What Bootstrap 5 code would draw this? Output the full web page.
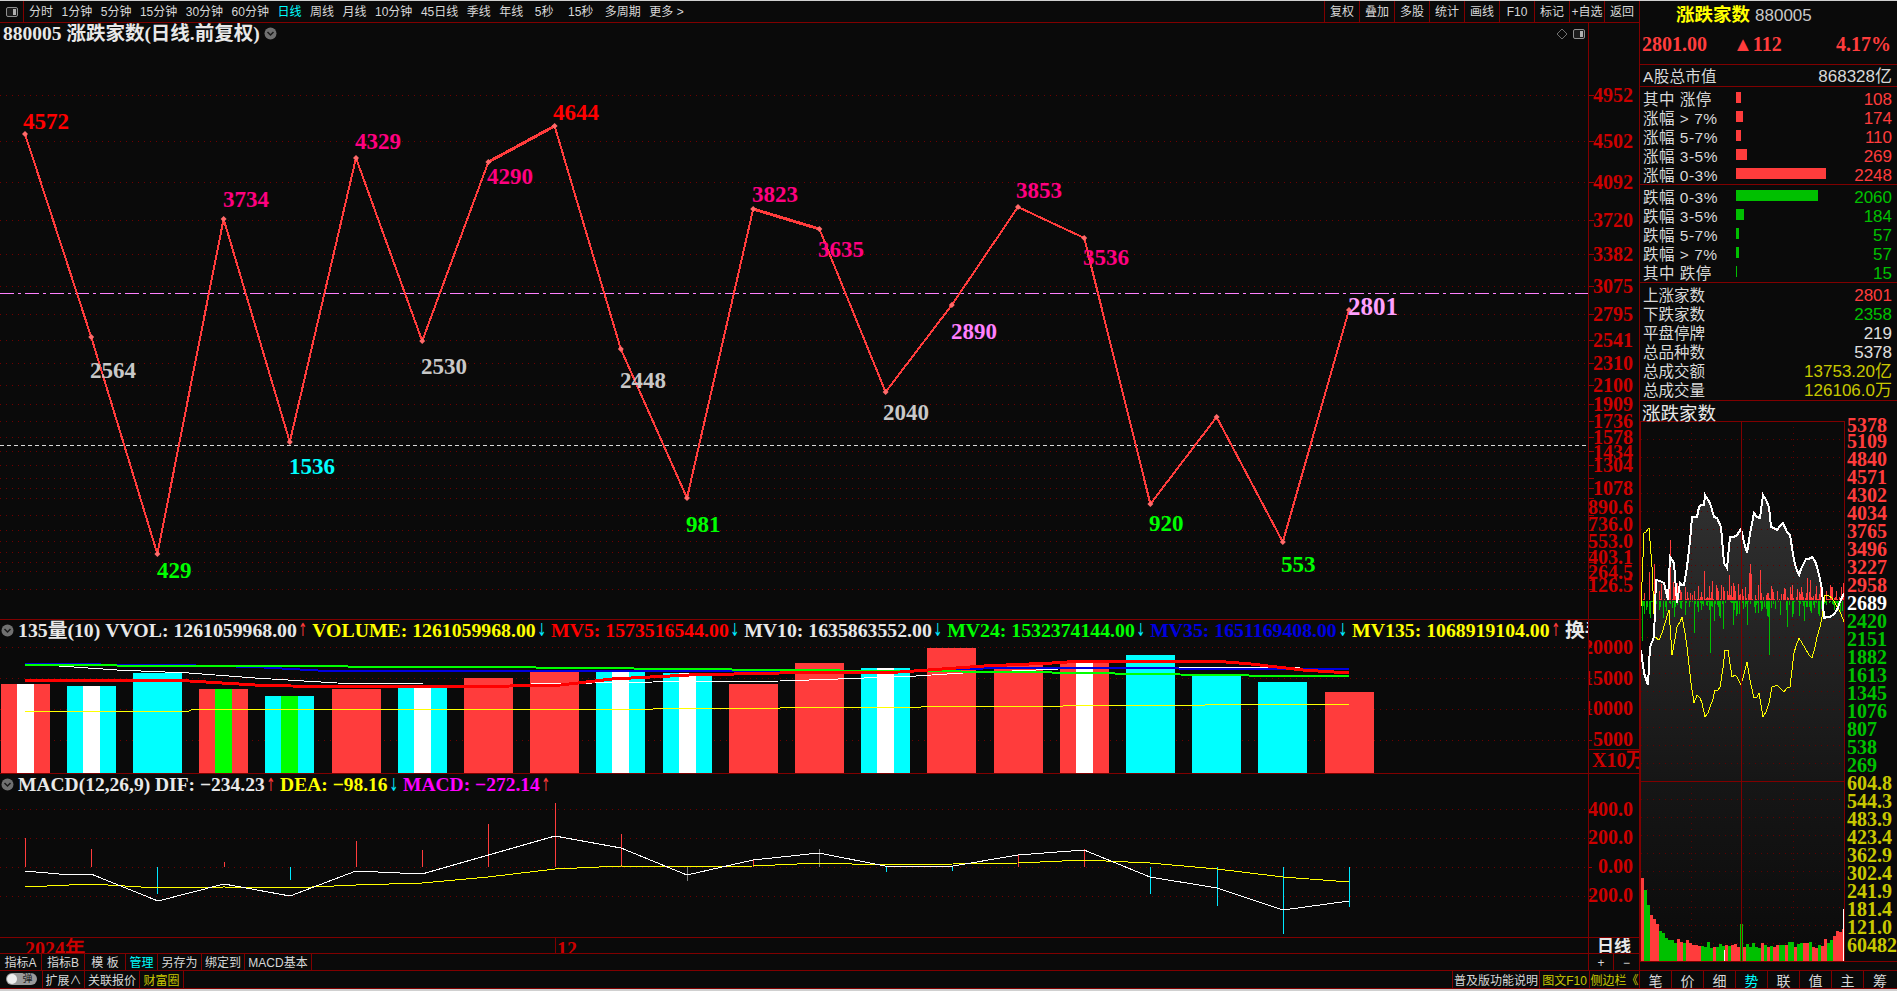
<!DOCTYPE html>
<html lang="zh-CN">
<head>
<meta charset="UTF-8">
<title>880005 涨跌家数</title>
<link href="https://cdn.jsdelivr.net/npm/bootstrap@5.3.2/dist/css/bootstrap.min.css" rel="stylesheet">
<script src="https://cdn.jsdelivr.net/npm/bootstrap@5.3.2/dist/js/bootstrap.bundle.min.js"></script>
<style>
    :root { --line: #800000; --sans: "Liberation Sans", "Noto Sans CJK SC", sans-serif; --serif: "Liberation Serif", "Noto Sans CJK SC", serif; }
    html, body { margin: 0; height: 991px; overflow: hidden; background: #0a0a0a; }
    svg { display: block; }
    .hq-app { width: 1897px; height: 991px; background: #0a0a0a; border-top: 1px solid #d0d0d0; border-bottom: 2px solid #d0d0d0; color: #d8d8d8; font-family: var(--sans); }
    .hq-left { width: 1640px; border-right: 1px solid var(--line); }
    .hq-right { width: 257px; }

    /* toolbars */
    .tool-bar { height: 22px; border-bottom: 1px solid var(--line); font-size: 12px; line-height: 23px; white-space: nowrap; }
    .tool-icon { width: 24px; border-right: 1px solid var(--line); }
    .tool-list { gap: 8.5px; padding-left: 5px; }
    .tool-gap { margin-left: 3px; margin-right: 3px; }
    .tool-cell { width: 35px; border-left: 1px solid var(--line); text-align: center; }
    .tool-on { color: #00ffff; }
    .tool-yel { color: #c8c800; }

    /* chart panes */
    .pane-main { height: 597px; border-bottom: 1px solid var(--line); }
    .pane-vol { height: 154px; border-bottom: 1px solid var(--line); }
    .pane-macd { height: 164px; border-bottom: 1px solid var(--line); }
    .pane-plot { width: 1588px; overflow: hidden; }
    .pane-axis { width: 51px; border-left: 1px solid var(--line); }
    .legend-row { font: bold 19.5px/20px var(--serif); white-space: nowrap; color: #e8e8e8; padding-left: 1px; }
    .legend-row > * { flex-shrink: 0; }
    .legend-vol { height: 20px; font-size: 19.75px; }
    .legend-macd { height: 21px; }
    .legend-title { height: 21px; padding-left: 3px; padding-right: 2px; }
    .legend-item { margin-left: 4.4px; }
    .legend-arrow { width: 11px; font: 18px/20px "DejaVu Sans", sans-serif; margin-left: -1px; margin-right: 1px; text-align: center; transform: scaleX(.6); }
    .c-wht { color: #e8e8e8; } .c-yel { color: #ffff00; } .c-red { color: #ff0000; } .c-grn { color: #00ff00; }
    .c-blu { color: #0000e0; } .c-mag { color: #ff00ff; } .c-cyn { color: #00e8ff; } .c-up { color: #ff3c3c; }

    /* bottom rows */
    .date-row { height: 16px; border-bottom: 1px solid var(--line); overflow: hidden; }
    .date-axis { width: 51px; border-left: 1px solid var(--line); font: bold 17px/17px var(--serif); text-align: center; color: #e8e8e8; }
    .cell-row { font-size: 12px; white-space: nowrap; border-bottom: 1px solid var(--line); }
    .cell-row-a { height: 17px; line-height: 18px; }
    .cell-row-b { height: 18px; line-height: 20px; }
    .row-cell { border-right: 1px solid var(--line); text-align: center; }
    .row-lcell { border-left: 1px solid var(--line); text-align: center; }
    .toggle-cell { width: 43px; }
    .toggle-pill { width: 31px; height: 12px; margin: 2px auto 0; border-radius: 6px; background: #9a9a9a; color: #222; font-size: 10px; line-height: 12px; text-align: right; padding-right: 4px; position: relative; }
    .toggle-pill::before { content: ""; position: absolute; left: 1px; top: 1px; width: 10px; height: 10px; border-radius: 50%; background: #eee; }
    .cw-25 { width: 25px; } .cw-26 { width: 26px; } .cw-32 { width: 32px; } .cw-41 { width: 41px; } .cw-42 { width: 42px; } .cw-43 { width: 43px; }
    .cw-44 { width: 44px; } .cw-50 { width: 50px; } .cw-55 { width: 55px; } .cw-67 { width: 67px; } .cw-87 { width: 87px; }

    /* right side quote panel */
    .q-head { height: 64px; border-bottom: 1px solid var(--line); }
    .q-name { height: 27px; padding-left: 36px; gap: 5px; }
    .q-title { font: bold 18.5px/25px "Noto Sans CJK SC", sans-serif; color: #ffff00; }
    .q-code { font-size: 17px; line-height: 30px; color: #c8c8c8; }
    .q-price { padding: 4px 6px 0 2px; font: bold 20px/24px var(--serif); color: #ff3c3c; }
    .q-change { margin-left: 26px; }
    .q-group { border-bottom: 1px solid var(--line); padding: 1px 5px 1px 3px; }
    .q-group-plain { padding-top: 3px; padding-bottom: 0; }
    .q-cap { height: 22px; border-bottom: 1px solid var(--line); padding: 0 5px 0 3px; font-size: 15.5px; line-height: 24px; letter-spacing: .3px; }
    .q-cap-num { font-size: 17px; letter-spacing: 0; }
    .q-line { height: 19px; line-height: 19px; font-size: 15.5px; white-space: pre; }
    .q-bars .q-label, .q-bars .q-num { padding-top: 4px; }
    .q-label { width: 93px; letter-spacing: .5px; }
    .q-bar { height: 11px; }
    .q-num { margin-left: auto; font-size: 17px; }
    .bar-up { background: #ff3c3c; } .bar-dn { background: #00c000; }
    .num-up { color: #ff3c3c; } .num-dn { color: #00c000; } .num-yel { color: #c8c800; } .num-wht { color: #e0e0e0; }
    .q-sub { height: 16px; padding-left: 2px; font: 18.5px/23px "Noto Sans CJK SC", sans-serif; color: #e8e8e8; position: relative; z-index: 1; }
    .q-tabs { height: 19px; border-top: 1px solid var(--line); border-bottom: 1px solid var(--line); font-size: 14px; line-height: 20px; }
    .q-tab { width: 32px; border-right: 1px solid var(--line); text-align: center; }

    /* svg text */
    .ax { font: bold 20px "Liberation Serif", serif; }
    .zz { font: bold 23px "Liberation Serif", serif; }
    .zz-big { font: bold 25px "Liberation Serif", serif; }
</style>
</head>
<body>
<div class="hq-app d-flex">

    <div class="hq-left d-flex flex-column">
        <!-- top toolbar -->
        <div class="tool-bar d-flex">
            <div class="tool-icon d-flex align-items-center justify-content-center">
                <svg width="14" height="12"><rect x="1.5" y="1.5" width="11" height="9" rx="1.5" fill="#1c1c1c" stroke="#909090"/><rect x="8" y="3" width="3" height="6" fill="#b0b0b0"/></svg>
            </div>
            <div class="tool-list d-flex">
                <span>分时</span><span>1分钟</span><span>5分钟</span><span>15分钟</span><span>30分钟</span><span>60分钟</span>
                <span class="tool-on">日线</span><span>周线</span><span>月线</span><span>10分钟</span><span>45日线</span><span>季线</span><span>年线</span>
                <span class="tool-gap">5秒</span><span class="tool-gap">15秒</span><span>多周期</span><span>更多 &gt;</span>
            </div>
            <div class="d-flex ms-auto">
                <div class="tool-cell">复权</div><div class="tool-cell">叠加</div><div class="tool-cell">多股</div><div class="tool-cell">统计</div>
                <div class="tool-cell">画线</div><div class="tool-cell">F10</div><div class="tool-cell">标记</div><div class="tool-cell">+自选</div><div class="tool-cell">返回</div>
            </div>
        </div>

        <!-- price pane -->
        <div class="pane-main d-flex">
            <div class="pane-plot d-flex flex-column">
                <div class="legend-row legend-title d-flex align-items-center">
                    <span>880005 涨跌家数(日线.前复权)</span>
                    <svg class="ms-1" width="13" height="13" viewBox="0 0 13 13"><circle cx="6.5" cy="6.5" r="6" fill="#707070"/><polyline points="3.5,5 6.5,8 9.5,5" fill="none" stroke="#1a1a1a" stroke-width="1.5"/></svg>
                    <svg class="ms-auto me-1" width="12" height="12" viewBox="0 0 12 12"><polygon points="6,1 11,6 6,11 1,6" fill="none" stroke="#707070"/></svg>
                    <svg width="14" height="12"><rect x="1.5" y="1.5" width="11" height="9" rx="1.5" fill="#1c1c1c" stroke="#909090"/><rect x="8" y="3" width="3" height="6" fill="#b0b0b0"/></svg>
                </div>
                <svg id="mainPlot" width="1588" height="575" viewBox="0 44 1588 575"></svg>
            </div>
            <div class="pane-axis"><svg id="mainAxis" width="50" height="596" viewBox="1589 23 50 596"></svg></div>
        </div>

        <!-- volume pane -->
        <div class="pane-vol d-flex">
            <div class="pane-plot d-flex flex-column">
                <div class="legend-row legend-vol d-flex align-items-center">
                    <svg class="me-1" width="13" height="13" viewBox="0 0 13 13"><circle cx="6.5" cy="6.5" r="6" fill="#707070"/><polyline points="3.5,5 6.5,8 9.5,5" fill="none" stroke="#1a1a1a" stroke-width="1.5"/></svg>
                    <span class="c-wht">135量(10) VVOL: 1261059968.00</span><span class="legend-arrow c-up">↑</span>
                    <span class="c-yel legend-item">VOLUME: 1261059968.00</span><span class="legend-arrow c-cyn">↓</span>
                    <span class="c-red legend-item">MV5: 1573516544.00</span><span class="legend-arrow c-cyn">↓</span>
                    <span class="c-wht legend-item">MV10: 1635863552.00</span><span class="legend-arrow c-cyn">↓</span>
                    <span class="c-grn legend-item">MV24: 1532374144.00</span><span class="legend-arrow c-cyn">↓</span>
                    <span class="c-blu legend-item">MV35: 1651169408.00</span><span class="legend-arrow c-cyn">↓</span>
                    <span class="c-yel legend-item">MV135: 1068919104.00</span><span class="legend-arrow c-up">↑</span>
                    <span class="c-wht legend-item">换手</span>
                </div>
                <svg id="volPlot" width="1588" height="133" viewBox="0 640 1588 133"></svg>
            </div>
            <div class="pane-axis"><svg id="volAxis" width="50" height="153" viewBox="1589 620 50 153"></svg></div>
        </div>

        <!-- macd pane -->
        <div class="pane-macd d-flex">
            <div class="pane-plot d-flex flex-column">
                <div class="legend-row legend-macd d-flex align-items-center">
                    <svg class="me-1" width="13" height="13" viewBox="0 0 13 13"><circle cx="6.5" cy="6.5" r="6" fill="#707070"/><polyline points="3.5,5 6.5,8 9.5,5" fill="none" stroke="#1a1a1a" stroke-width="1.5"/></svg>
                    <span class="c-wht">MACD(12,26,9) DIF: −234.23</span><span class="legend-arrow c-up">↑</span>
                    <span class="c-yel legend-item">DEA: −98.16</span><span class="legend-arrow c-cyn">↓</span>
                    <span class="c-mag legend-item">MACD: −272.14</span><span class="legend-arrow c-up">↑</span>
                </div>
                <svg id="macdPlot" width="1588" height="142" viewBox="0 795 1588 142"></svg>
            </div>
            <div class="pane-axis"><svg id="macdAxis" width="50" height="163" viewBox="1589 774 50 163"></svg></div>
        </div>

        <!-- date axis -->
        <div class="date-row d-flex">
            <div class="pane-plot"><svg id="datePlot" width="1588" height="15" viewBox="0 938 1588 15"></svg></div>
            <div class="date-axis">日线</div>
        </div>

        <!-- bottom tool rows -->
        <div class="cell-row cell-row-a d-flex">
            <div class="row-cell cw-42">指标A</div><div class="row-cell cw-43">指标B</div><div class="row-cell cw-41">模 板</div>
            <div class="row-cell cw-32 tool-on">管理</div><div class="row-cell cw-44">另存为</div><div class="row-cell cw-43">绑定到</div><div class="row-cell cw-67">MACD基本</div>
            <div class="row-lcell cw-25 ms-auto">+</div><div class="row-lcell cw-26">−</div>
        </div>
        <div class="cell-row cell-row-b d-flex">
            <div class="row-cell toggle-cell"><div class="toggle-pill">弹</div></div>
            <div class="row-cell cw-42">扩展∧</div><div class="row-cell cw-55">关联报价</div><div class="row-cell cw-44 tool-yel">财富圈</div>
            <div class="row-lcell cw-87 ms-auto">普及版功能说明</div>
            <div class="row-lcell cw-50 tool-yel">图文F10</div>
            <div class="row-lcell cw-50 tool-yel">侧边栏《</div>
        </div>
    </div>

    <!-- quote panel -->
    <div class="hq-right d-flex flex-column">
        <div class="q-head">
            <div class="q-name d-flex"><span class="q-title">涨跌家数</span><span class="q-code">880005</span></div>
            <div class="q-price d-flex"><span>2801.00</span><span class="q-change">▲112</span><span class="ms-auto">4.17%</span></div>
        </div>
        <div class="q-cap d-flex justify-content-between"><span>A股总市值</span><span class="q-cap-num">868328亿</span></div>
        <div class="q-group q-bars">
            <div class="q-line d-flex align-items-center"><span class="q-label">其中 涨停</span><div class="q-bar bar-up" style="width:5px"></div><span class="q-num num-up">108</span></div>
            <div class="q-line d-flex align-items-center"><span class="q-label">涨幅 &gt; 7%</span><div class="q-bar bar-up" style="width:7px"></div><span class="q-num num-up">174</span></div>
            <div class="q-line d-flex align-items-center"><span class="q-label">涨幅 5-7%</span><div class="q-bar bar-up" style="width:5px"></div><span class="q-num num-up">110</span></div>
            <div class="q-line d-flex align-items-center"><span class="q-label">涨幅 3-5%</span><div class="q-bar bar-up" style="width:11px"></div><span class="q-num num-up">269</span></div>
            <div class="q-line d-flex align-items-center"><span class="q-label">涨幅 0-3%</span><div class="q-bar bar-up" style="width:90px"></div><span class="q-num num-up">2248</span></div>
        </div>
        <div class="q-group q-bars">
            <div class="q-line d-flex align-items-center"><span class="q-label">跌幅 0-3%</span><div class="q-bar bar-dn" style="width:82px"></div><span class="q-num num-dn">2060</span></div>
            <div class="q-line d-flex align-items-center"><span class="q-label">跌幅 3-5%</span><div class="q-bar bar-dn" style="width:8px"></div><span class="q-num num-dn">184</span></div>
            <div class="q-line d-flex align-items-center"><span class="q-label">跌幅 5-7%</span><div class="q-bar bar-dn" style="width:3px"></div><span class="q-num num-dn">57</span></div>
            <div class="q-line d-flex align-items-center"><span class="q-label">跌幅 &gt; 7%</span><div class="q-bar bar-dn" style="width:3px"></div><span class="q-num num-dn">57</span></div>
            <div class="q-line d-flex align-items-center"><span class="q-label">其中 跌停</span><div class="q-bar bar-dn" style="width:1px"></div><span class="q-num num-dn">15</span></div>
        </div>
        <div class="q-group q-group-plain">
            <div class="q-line d-flex"><span>上涨家数</span><span class="q-num num-up">2801</span></div>
            <div class="q-line d-flex"><span>下跌家数</span><span class="q-num num-dn">2358</span></div>
            <div class="q-line d-flex"><span>平盘停牌</span><span class="q-num num-wht">219</span></div>
            <div class="q-line d-flex"><span>总品种数</span><span class="q-num num-wht">5378</span></div>
            <div class="q-line d-flex"><span>总成交额</span><span class="q-num num-yel">13753.20亿</span></div>
            <div class="q-line d-flex"><span>总成交量</span><span class="q-num num-yel">126106.0万</span></div>
        </div>
        <div class="q-sub">涨跌家数</div>
        <svg id="miniChart" width="257" height="553" viewBox="1640 417 257 553"></svg>
        <div class="q-tabs d-flex">
            <div class="q-tab">笔</div><div class="q-tab">价</div><div class="q-tab">细</div><div class="q-tab tool-on">势</div>
            <div class="q-tab">联</div><div class="q-tab">值</div><div class="q-tab">主</div><div class="q-tab border-0">筹</div>
        </div>
    </div>
</div>

<script>
    var LINE = "#800000", UP = "#ff3c3c", DOWN = "#00c000";

    function seg(x1, y1, x2, y2, color, width, dash) {
        return '<line x1="' + x1 + '" y1="' + y1 + '" x2="' + x2 + '" y2="' + y2 + '" stroke="' + color + '" stroke-width="' + (width || 1) + '"' +
            (dash ? ' stroke-dasharray="' + dash + '"' : '') + ' shape-rendering="crispEdges"/>';
    }
    function poly(points, color, width) {
        return '<polyline points="' + points.join(" ") + '" fill="none" stroke="' + color + '" stroke-width="' + (width || 1) + '" shape-rendering="crispEdges"/>';
    }
    function box(x, y, w, h, color) {
        return '<rect x="' + x + '" y="' + y + '" width="' + w + '" height="' + h + '" fill="' + color + '" shape-rendering="crispEdges"/>';
    }
    function label(x, y, text, color, cls, anchor) {
        return '<text x="' + x + '" y="' + y + '" class="' + cls + '" fill="' + color + '" text-anchor="' + (anchor || "start") + '" dominant-baseline="central">' + text + '</text>';
    }
    function dotted(y, x2) {
        return seg(0, y + 0.5, x2, y + 0.5, "#700000", 1, "1 5");
    }
    function rnd(i) {
        var v = Math.sin(i * 12.9898) * 43758.5453;
        return v - Math.floor(v);
    }
    var barX = function (i) { return 25 + 66.2 * i; };

    // price pane
    var ticks = [95, 141, 182, 220, 254, 286, 314, 340, 363, 385, 404, 421, 437, 451, 465, 478, 488, 498, 515, 530, 541, 552, 562, 571, 589];
    var zig = [134, 337, 554, 219, 442, 158, 341, 162, 126, 349, 498, 209, 229, 392, 305, 207, 238, 504, 417, 542, 310];
    var zigLabels = [
        [23, 121, "4572", "#ff0000"], [90, 370, "2564", "#c8c8c8"], [157, 570, "429", "#00ff00"], [223, 199, "3734", "#ff0080"],
        [289, 466, "1536", "#00ffff"], [355, 141, "4329", "#ff0080"], [421, 366, "2530", "#c8c8c8"], [487, 176, "4290", "#ff0080"],
        [553, 112, "4644", "#ff0000"], [620, 380, "2448", "#c8c8c8"], [686, 524, "981", "#00ff00"], [752, 194, "3823", "#ff0080"],
        [818, 249, "3635", "#ff0080"], [883, 412, "2040", "#c8c8c8"], [951, 331, "2890", "#ff80ff"], [1016, 190, "3853", "#ff0080"],
        [1083, 257, "3536", "#ff0080"], [1149, 523, "920", "#00ff00"], [1281, 564, "553", "#00ff00"]
    ];
    var html = "";
    ticks.forEach(function (y) { html += dotted(y, 1588); });
    html += seg(0, 293.5, 1588, 293.5, "#ff80ff", 1, "14 4 3 4");
    html += seg(0, 445.5, 1588, 445.5, "#d8d8d8", 1, "4 3");
    zig.forEach(function (y, i) {
        if (i > 0) html += seg(barX(i - 1), zig[i - 1], barX(i), y, UP, (i === 8 || i === 12) ? 3 : 2);
    });
    zig.forEach(function (y, i) {
        var x = barX(i);
        html += '<polygon points="' + x + ',' + (y - 3) + ' ' + (x + 3) + ',' + y + ' ' + x + ',' + (y + 3) + ' ' + (x - 3) + ',' + y + '" fill="#ff6a6a"/>';
    });
    zigLabels.forEach(function (l) { html += label(l[0], l[1], l[2], l[3], "zz"); });
    html += label(1348, 306, "2801", "#ffa0ff", "zz-big");
    document.getElementById("mainPlot").innerHTML = html;

    var axisTicks = [[95, 95, "4952"], [141, 141, "4502"], [182, 182, "4092"], [220, 220, "3720"], [254, 254, "3382"], [286, 286, "3075"], [314, 314, "2795"],
        [340, 340, "2541"], [363, 363, "2310"], [385, 385, "2100"], [404, 404, "1909"], [421, 421, "1736"], [437, 437, "1578"], [451, 452, "1434"], [465, 465, "1304"],
        [488, 488, "1078"], [498, 507, "890.6"], [515, 524, "736.0"], [541, 541, "553.0"], [552, 557, "403.1"], [571, 572, "264.5"], [589, 585, "126.5"]];
    html = "";
    ticks.forEach(function (y) { html += seg(1589, y + 0.5, 1594, y + 0.5, "#a00000"); });
    axisTicks.forEach(function (t) { html += label(1633, t[1], t[2], "#cc0000", "ax", "end"); });
    document.getElementById("mainAxis").innerHTML = html;

    // volume pane
    var volBars = [
        [684, UP, "#fff"], [686, "#0ff", "#fff"], [673, "#0ff"], [689, UP, "#0f0"], [696, "#0ff", "#0f0"], [689, UP], [686, "#0ff", "#fff"],
        [678, UP], [670, UP], [671, "#0ff", "#fff"], [673, "#0ff", "#fff"], [684, UP], [663, UP], [668, "#0ff", "#fff"], [648, UP],
        [665, UP], [662, UP, "#fff"], [655, "#0ff"], [675, "#0ff"], [682, "#0ff"], [692, UP]
    ];
    html = "";
    [647, 678, 709, 740].forEach(function (y) { html += dotted(y, 1588); });
    volBars.forEach(function (b, i) {
        var x = Math.round(barX(i) - 24.5);
        html += box(x, b[0], 49, 773 - b[0], b[1]);
        if (b[2]) html += box(x + 16, b[0], 17, 773 - b[0], b[2]);
    });
    html += poly(["25,711", "189,711", "191,710", "653,709", "780,708", "1349,704"], "#ffff00", 1);
    html += poly(["25,663", "59,666", "117,670", "189,673", "255,678", "337,683", "423,684", "531,684", "653,682", "780,681", "838,679", "916,676", "963,673", "1036,670", "1104,667", "1251,667", "1349,669"], "#ffffff", 1);
    html += poly(["25,664", "176,665", "255,667", "327,671", "490,671", "900,671", "1000,668", "1349,669"], "#0000e0", 2);
    html += poly(["25,665", "209,666", "485,667", "780,670", "900,671", "1020,672", "1146,674", "1282,676", "1349,676"], "#00ff00", 2);
    html += poly(["25,680", "173,680", "255,685", "291,686", "423,687", "510,686", "561,685", "612,679", "689,675", "780,673", "900,672", "984,666", "1052,663", "1083,661", "1214,661", "1251,664", "1303,670", "1349,673"], "#ff0000", 3);
    document.getElementById("volPlot").innerHTML = html;

    html = seg(1589, 749.5, 1639, 749.5, LINE);
    [[647, "20000"], [678, "15000"], [708, "10000"], [739, "5000"]].forEach(function (t) { html += label(1633, t[0], t[1], "#cc0000", "ax", "end"); });
    html += label(1592, 760, "X10万", "#cc0000", "ax");
    [647, 678, 709, 740].forEach(function (y) { html += seg(1589, y + 0.5, 1592, y + 0.5, "#a00000"); });
    document.getElementById("volAxis").innerHTML = html;

    // macd pane
    var macdBars = [838, 849, 894, 862, 880, 841, 850, 824, 803, 834, 881, 859, 849, 872, 871, 854, 849, 894, 906, 934, 907];
    html = "";
    [809, 838, 867, 896].forEach(function (y) { html += dotted(y, 1588); });
    macdBars.forEach(function (y, i) {
        var color = y < 867 ? UP : "#00e8ff";
        if (i === 10 || i === 12) color = "#808080";
        html += seg(Math.round(barX(i)) + 0.5, 867, Math.round(barX(i)) + 0.5, y, color);
    });
    html += poly(["25,887", "91,884", "158,888", "224,887", "290,888", "356,885", "422,883", "488,877", "555,869", "621,866", "687,867", "753,866", "819,863", "885,865", "953,864", "1018,863", "1084,860", "1150,863", "1217,869", "1283,877", "1349,882"], "#ffff00", 1);
    html += poly(["25,871", "59,874", "91,874", "158,901", "224,884", "290,896", "356,871", "422,874", "555,836", "621,848", "687,875", "753,860", "819,853", "885,866", "953,866", "1018,855", "1084,850", "1150,877", "1217,888", "1283,910", "1349,901"], "#ffffff", 1);
    document.getElementById("macdPlot").innerHTML = html;

    html = "";
    [[809, "400.0"], [837, "200.0"], [866, "0.00"], [895, "200.0"]].forEach(function (t) { html += label(1633, t[0], t[1], "#cc0000", "ax", "end"); });
    [809, 838, 867, 896].forEach(function (y) { html += seg(1589, y + 0.5, 1592, y + 0.5, "#a00000"); });
    document.getElementById("macdAxis").innerHTML = html;

    document.getElementById("datePlot").innerHTML = label(25, 949, "2024年", "#cc0000", "ax") + seg(555.5, 938, 555.5, 953, LINE) + label(557, 949, "12", "#cc0000", "ax");

    // intraday mini chart, page coordinates
    var whiteLine = [[132,690],[140,760],[152,795],[160,680],[172,650],[178,480],[200,490],[212,540],[220,410],[232,430],[240,550],[248,490],[262,495],[270,440],[285,290],[300,290],[305,260],[320,255],[325,225],[340,250],[350,290],[360,295],[372,320],[380,430],[390,445],[400,350],[420,345],[433,328],[450,400],[470,280],[490,295],[497,225],[515,260],[522,320],[540,330],[558,310],[570,335],[580,345],[590,420],[605,465],[620,430],[645,410],[660,440],[675,510],[680,595],[700,590],[720,570],[740,520]];
    var yellowLine = [[132,560],[140,340],[155,325],[165,440],[175,650],[185,660],[205,610],[215,570],[225,705],[240,620],[255,590],[270,680],[282,790],[290,850],[300,825],[315,850],[325,890],[340,860],[355,810],[370,800],[385,690],[392,690],[405,770],[420,770],[433,795],[450,725],[470,835],[487,820],[498,890],[515,850],[525,800],[540,795],[560,815],[578,800],[590,700],[605,655],[625,685],[645,715],[660,650],[675,590],[685,525],[705,535],[725,570],[740,605]];
    // source points are on a 3x grid; split long runs so the line gets its minute-by-minute jitter
    function jag(points) {
        var out = [];
        points.forEach(function (p, i) {
            if (i === 0) { out.push(p); return; }
            var a = points[i - 1], n = Math.max(1, Math.round((p[0] - a[0]) / 9));
            for (var s = 1; s <= n; s++) {
                var t = s / n, wob = s < n ? (rnd(a[0] + s) - 0.5) * 12 : 0;
                out.push([a[0] + (p[0] - a[0]) * t, a[1] + (p[1] - a[1]) * t + wob]);
            }
        });
        return out;
    }
    var toPage = function (p) { return Math.round(1597 + p[0] / 3) + "," + Math.round(420 + p[1] / 3); };
    var redPeaks = { 1670: 60, 1654: 36, 1649: 28, 1704: 29, 1729: 25, 1750: 36, 1749: 27, 1751: 26, 1760: 30, 1807: 22, 1810: 20, 1843: 17 };
    var greenPeaks = { 1710: 52, 1769: 54, 1694: 32, 1723: 28, 1714: 20, 1733: 24, 1747: 24, 1804: 20, 1787: 26, 1642: 40 };

    html = '<defs><linearGradient id="areaFill" x1="0" y1="0" x2="0" y2="1"><stop offset="0" stop-color="#303030"/><stop offset="1" stop-color="#161616"/></linearGradient>' +
        '<linearGradient id="volFill" x1="0" y1="0" x2="0" y2="1"><stop offset="0" stop-color="#161616"/><stop offset="1" stop-color="#0a0a0a"/></linearGradient></defs>';
    html += box(1641, 781, 203, 180, "url(#volFill)");
    html += '<polygon points="1641,781 ' + whiteLine.map(toPage).join(" ") + ' 1844,781" fill="url(#areaFill)"/>';
    for (var g = 0; g < 20; g++) {
        var gy = 439 + g * 18;
        if (gy < 781) html += seg(1641, gy + 0.5, 1844, gy + 0.5, "#600000", 1, "1 5");
    }
    for (var k = 1; k <= 10; k++) html += seg(1641, 781 + k * 18 + 0.5, 1844, 781 + k * 18 + 0.5, "#600000", 1, "1 5");
    html += seg(1691.5, 421, 1691.5, 961, "#600000", 1, "1 5") + seg(1793.5, 421, 1793.5, 961, "#600000", 1, "1 5");

    // tick bars around the zero line
    for (var x = 1641; x < 1844; x++) {
        var r = rnd(x), r2 = rnd(x + 500);
        var up = redPeaks[x] || (r > 0.35 ? Math.round(r2 * r2 * 18) + 1 : 0);
        var dn = greenPeaks[x] || (rnd(x + 900) > 0.35 ? Math.round(rnd(x + 1300) * rnd(x + 1300) * 16) + 1 : 0);
        if (up) html += box(x, 600 - up, 1, up, UP);
        if (dn) html += box(x, 601, 1, dn, DOWN);
    }
    html += poly(jag(yellowLine).map(toPage), "#ffff00", 1);
    html += poly(jag(whiteLine).map(toPage), "#ffffff", 2);

    // minute volume
    for (var c = 0; c < 68; c++) {
        var vx = 1641 + c * 3;
        var h = 13 + 66 * Math.exp(-c / 4) + rnd(c + 40) * 7;
        if (c > 60) h += (c - 60) * 2.2;
        if (c === 33) h = 37;
        html += box(vx, 961 - Math.round(h), 3, Math.round(h), (rnd(c + 77) > 0.5 || c > 64 || c === 4 || c === 5) ? UP : DOWN);
    }
    html += box(1640, 797, 1, 164, UP);
    html += box(1724, 950, 1, 11, "#fff");
    html += box(1843, 909, 2, 52, "#fff");

    // frame
    html += seg(1640.5, 421, 1640.5, 961, LINE) + seg(1844.5, 421, 1844.5, 961, LINE) + seg(1741.5, 421, 1741.5, 961, LINE);
    html += seg(1640, 421.5, 1845, 421.5, LINE) + seg(1640, 781.5, 1845, 781.5, LINE) + seg(1640, 961.5, 1897, 961.5, LINE);

    var scale = [[5378, UP], [5109, UP], [4840, UP], [4571, UP], [4302, UP], [4034, UP], [3765, UP], [3496, UP], [3227, UP], [2958, UP], [2689, "#fff"],
        [2420, DOWN], [2151, DOWN], [1882, DOWN], [1613, DOWN], [1345, DOWN], [1076, DOWN], [807, DOWN], [538, DOWN], [269, DOWN]];
    scale.forEach(function (s, i) {
        html += label(1847, i === 0 ? 425 : 422.7 + i * 18, s[0], s[1], "ax");
    });
    ["604.8", "544.3", "483.9", "423.4", "362.9", "302.4", "241.9", "181.4", "121.0", "60482"].forEach(function (s, i) {
        html += label(1847, 783 + i * 18, s, "#c8c800", "ax");
    });
    document.getElementById("miniChart").innerHTML = html;
</script>
</body>
</html>
